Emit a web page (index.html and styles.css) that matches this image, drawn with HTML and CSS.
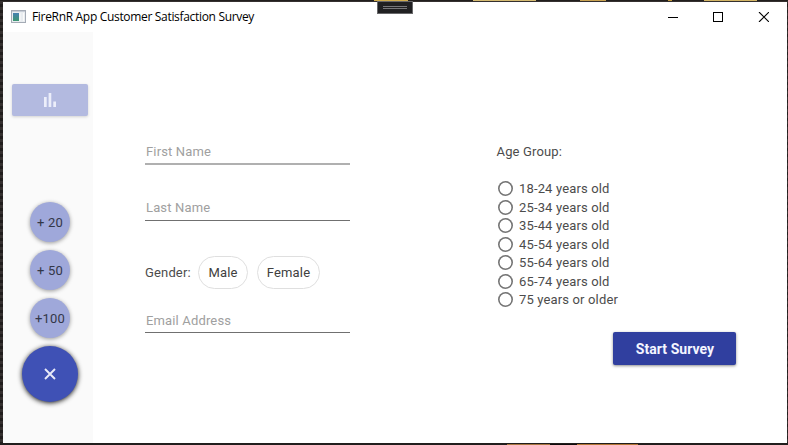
FILE: index.html
```html
<!DOCTYPE html>
<html lang="en">
<head>
<meta charset="utf-8">
<title>FireRnR App Customer Satisfaction Survey</title>
<link rel="stylesheet" href="styles.css">
</head>
<body>
<div class="window">
  <header class="titlebar">
    <svg class="app-icon" width="15" height="13" viewBox="0 0 15 13"><defs><linearGradient id="pane" x2="0" y2="1"><stop stop-color="#4580b0"/><stop offset="1" stop-color="#3b9670"/></linearGradient></defs><rect x=".5" y=".5" width="14" height="12" fill="#e9edf0" stroke="#a4abb5"/><path d="M1 1.5h13" stroke="#c7cdd6"/><rect x="2" y="3" width="6" height="8" fill="url(#pane)"/><path d="M9 3v8M12.5 3v8" stroke="#fafafa"/></svg>
    <span class="title">FireRnR App Customer Satisfaction Survey</span>
    <svg class="controls" width="101" height="10" viewBox="0 0 101 10" fill="none" stroke="#000"><path d="M0 5.5h10"/><rect x="45.5" y=".5" width="9" height="9"/><path d="M91 0l10 10M101 0L91 10" stroke-width="1.1"/></svg>
  </header>
  <div class="body">
    <aside class="sidebar">
      <button class="chart-button"><svg width="12" height="14" viewBox="0 0 12 14" fill="#eceefa"><path d="M0 4h2.7v10H0zM4.6 0h2.7v14H4.6zM9.3 8.5H12V14H9.3z"/></svg></button>
      <div class="fabs">
        <button class="fab"><span>+ 20</span></button>
        <button class="fab"><span>+ 50</span></button>
        <button class="fab"><span>+100</span></button>
        <button class="fab fab-main"><svg width="12" height="12" viewBox="0 0 12 12" stroke="#e8eaf8" stroke-width="1.9"><path d="M1 1l10 10M11 1L1 11"/></svg></button>
      </div>
    </aside>
    <main class="content">
      <form class="fields">
        <div class="field first"><span>First Name</span></div>
        <div class="field last"><span>Last Name</span></div>
        <div class="gender"><span class="gender-label">Gender:</span><span class="chip male"><span>Male</span></span><span class="chip female"><span>Female</span></span></div>
        <div class="field email"><span>Email Address</span></div>
      </form>
      <section class="side">
        <div class="group-label"><span>Age Group:</span></div>
        <div class="ages">
          <label class="age"><i class="radio"></i><span>18-24 years old</span></label>
          <label class="age"><i class="radio"></i><span>25-34 years old</span></label>
          <label class="age"><i class="radio"></i><span>35-44 years old</span></label>
          <label class="age"><i class="radio"></i><span>45-54 years old</span></label>
          <label class="age"><i class="radio"></i><span>55-64 years old</span></label>
          <label class="age"><i class="radio"></i><span>65-74 years old</span></label>
          <label class="age"><i class="radio"></i><span>75 years or older</span></label>
        </div>
        <button class="start"><span>Start Survey</span></button>
      </section>
    </main>
  </div>
</div>
<div class="handle"></div>
</body>
</html>
```
FILE: styles.css
```css
* { box-sizing: border-box; }
body {
  margin: 0;
  width: 788px;
  height: 445px;
  padding: 2px 1px 2px 3px;
  overflow: hidden;
  font: 13px/16px Roboto, "Liberation Sans", sans-serif;
  letter-spacing: 0.15px;
  color: #4c4c4c;
  background:
    linear-gradient(90deg, transparent 374px, #d0ac4c 374px 408px, transparent 408px 473px, #d5bb72 473px 536px, transparent 536px 580px, #c9a251 580px 606px, transparent 606px 668px, #c39a3c 668px 672px, transparent 672px 704px, #d3b565 704px 757px, transparent 757px) 0 0 / 100% 1px no-repeat,
    linear-gradient(90deg, transparent 507px, #a87540 507px 550px, #100c0c 550px 577px, #b37535 577px 638px, transparent 638px) 0 100% / 100% 1px no-repeat,
    repeating-linear-gradient(0deg, #211e1d 0 3px, #35302f 3px 6px);
}
button { border: 0; padding: 0; font: inherit; letter-spacing: inherit; display: flex; align-items: center; justify-content: center; }
.window { height: 441px; background: #fff; display: flex; flex-direction: column; }
.titlebar { height: 30px; padding: 0 18px 2px 8px; display: flex; align-items: center; }
.app-icon { margin-top: 1px; }
.title { margin-left: 6px; font: 12px/16px "Open Sans", sans-serif; letter-spacing: -0.32px; color: #000; white-space: nowrap; margin-top: 2px; }
.controls { margin-left: auto; margin-top: 1px; }
.handle { position: absolute; left: 377px; top: 1px; width: 36px; height: 13px; border: 1px solid #68686a; background: linear-gradient(#77777a 0 1px, transparent 1px 2px, #77777a 2px 3px) 5px 4px / 24px 3px no-repeat #202022; }
.body { flex: 1; display: flex; }
.sidebar { width: 90px; padding: 52px 5px 41px 9px; background: #fafafa; display: flex; flex-direction: column; justify-content: space-between; }
.chart-button { width: 76px; height: 32px; border-radius: 2px; background: #b3bae0; box-shadow: 0 1px 3px rgba(0,0,0,.16); }
.fabs { width: 76px; display: flex; flex-direction: column; align-items: center; gap: 8px; }
.fab { width: 40px; height: 40px; padding-top: 1px; border-radius: 50%; background: #9fa8da; color: #333748; box-shadow: 0 1px 4px rgba(0,0,0,.4); white-space: nowrap; }
.fab-main { width: 56px; height: 56px; padding-top: 0; background: #3f51b5; box-shadow: 0 1px 5px rgba(0,0,0,.9); }
.content { flex: 1; display: flex; padding: 111px 0 0 52px; gap: 147px; }
.fields { width: 205px; display: flex; flex-direction: column; }
.field { height: 22px; padding: 1px 0 0 1px; color: #a0a0a0; border-bottom: 1px solid #707070; }
.first { border-bottom: 2px solid #b0b0b0; }
.last { margin-top: 34px; }
.gender { display: flex; align-items: center; height: 33px; margin-top: 35px; }
.gender-label { width: 53px; }
.chip { height: 33px; border: 1px solid #dfdfdf; border-radius: 17px; display: flex; align-items: center; justify-content: center; color: #404040; }
.male { width: 50px; }
.female { width: 63px; margin-left: 9px; }
.email { margin-top: 22px; padding-top: 2px; }
.side { flex: 1; display: flex; flex-direction: column; margin-top: 1px; }
.group-label { margin-left: -0.5px; }
.ages { margin-top: 20px; }
.age { height: 18.5px; display: flex; align-items: center; }
.radio { width: 15px; height: 15px; margin: -1px 6px 0 1px; border-radius: 50%; box-shadow: inset 0 0 0 1.6px #757575; }
.start { width: 123px; height: 33px; margin: 22.5px 0 0 116px; padding-left: 1px; border-radius: 2px; background: #303f9f; color: #f4f5ff; font-size: 14px; font-weight: 700; letter-spacing: 0.05px; box-shadow: 0 1px 3px rgba(0,0,0,.45); }
```
